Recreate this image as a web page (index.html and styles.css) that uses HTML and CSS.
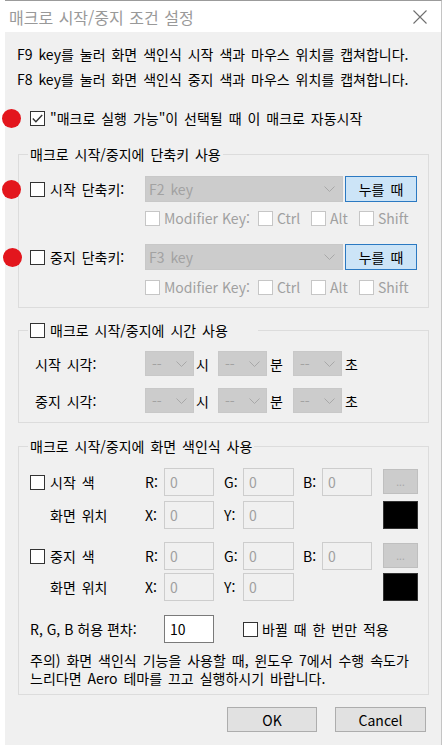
FILE: index.html
```html
<!DOCTYPE html>
<html lang="ko">
<head>
<meta charset="utf-8">
<title>매크로 시작/중지 조건 설정</title>
<link rel="stylesheet" href="styles.css">
</head>
<body>
<div class="window">
  <div class="titlebar">
    <span class="title">매크로 시작/중지 조건 설정</span>
    <svg class="close" width="14" height="14" viewBox="0 0 14 14"><path d="M0.5 0.5 L13.5 13.5 M13.5 0.5 L0.5 13.5" stroke="#6f6f6f" stroke-width="1.1" fill="none"/></svg>
  </div>
  <div class="content">
    <div class="line">F9 key를 눌러 화면 색인식 시작 색과 마우스 위치를 캡쳐합니다.</div>
    <div class="line">F8 key를 눌러 화면 색인식 중지 색과 마우스 위치를 캡쳐합니다.</div>

    <div class="check-row autostart">
      <span class="dot d-auto"></span>
      <span class="cb"><svg width="11" height="9" viewBox="0 0 11 9"><path d="M0.8 4.6 L3.9 7.7 L10.2 1" stroke="#333" stroke-width="1.4" fill="none"/></svg></span>
      <span>"매크로 실행 가능"이 선택될 때 이 매크로 자동시작</span>
    </div>

    <fieldset class="group hotkeys">
      <legend>매크로 시작/중지에 단축키 사용</legend>
      <div class="hk-row">
        <span class="dot d-hk1"></span>
        <span class="hk-label"><span class="cb"></span>시작 단축키:</span>
        <span class="combo wide"><span>F2 key</span><svg class="chev" width="11" height="6" viewBox="0 0 11 6"><path d="M0.5 0.5 L5.5 5.5 L10.5 0.5" stroke="#a8a8a8" fill="none"/></svg></span>
        <button class="press">누를 때</button>
      </div>
      <div class="mod-row">
        <span class="mod m1"><span class="cb dis"></span>Modifier Key:</span>
        <span class="mod m2"><span class="cb dis"></span>Ctrl</span>
        <span class="mod m3"><span class="cb dis"></span>Alt</span>
        <span class="mod"><span class="cb dis"></span>Shift</span>
      </div>
      <div class="hk-row second">
        <span class="dot d-hk2"></span>
        <span class="hk-label"><span class="cb"></span>중지 단축키:</span>
        <span class="combo wide"><span>F3 key</span><svg class="chev" width="11" height="6" viewBox="0 0 11 6"><path d="M0.5 0.5 L5.5 5.5 L10.5 0.5" stroke="#a8a8a8" fill="none"/></svg></span>
        <button class="press">누를 때</button>
      </div>
      <div class="mod-row second">
        <span class="mod m1"><span class="cb dis"></span>Modifier Key:</span>
        <span class="mod m2"><span class="cb dis"></span>Ctrl</span>
        <span class="mod m3"><span class="cb dis"></span>Alt</span>
        <span class="mod"><span class="cb dis"></span>Shift</span>
      </div>
    </fieldset>

    <fieldset class="group timegrp">
      <legend class="cb-legend"><span class="legend-inner"><span class="cb"></span>매크로 시작/중지에 시간 사용</span></legend>
      <div class="time-row">
        <span class="time-label">시작 시각:</span>
        <span class="combo small"><span>--</span><svg class="chev" width="11" height="6" viewBox="0 0 11 6"><path d="M0.5 0.5 L5.5 5.5 L10.5 0.5" stroke="#a8a8a8" fill="none"/></svg></span>
        <span class="unit u1">시</span>
        <span class="combo small"><span>--</span><svg class="chev" width="11" height="6" viewBox="0 0 11 6"><path d="M0.5 0.5 L5.5 5.5 L10.5 0.5" stroke="#a8a8a8" fill="none"/></svg></span>
        <span class="unit u2">분</span>
        <span class="combo small"><span>--</span><svg class="chev" width="11" height="6" viewBox="0 0 11 6"><path d="M0.5 0.5 L5.5 5.5 L10.5 0.5" stroke="#a8a8a8" fill="none"/></svg></span>
        <span class="unit u3">초</span>
      </div>
      <div class="time-row second">
        <span class="time-label">중지 시각:</span>
        <span class="combo small"><span>--</span><svg class="chev" width="11" height="6" viewBox="0 0 11 6"><path d="M0.5 0.5 L5.5 5.5 L10.5 0.5" stroke="#a8a8a8" fill="none"/></svg></span>
        <span class="unit u1">시</span>
        <span class="combo small"><span>--</span><svg class="chev" width="11" height="6" viewBox="0 0 11 6"><path d="M0.5 0.5 L5.5 5.5 L10.5 0.5" stroke="#a8a8a8" fill="none"/></svg></span>
        <span class="unit u2">분</span>
        <span class="combo small"><span>--</span><svg class="chev" width="11" height="6" viewBox="0 0 11 6"><path d="M0.5 0.5 L5.5 5.5 L10.5 0.5" stroke="#a8a8a8" fill="none"/></svg></span>
        <span class="unit u3">초</span>
      </div>
    </fieldset>

    <fieldset class="group colorgrp">
      <legend>매크로 시작/중지에 화면 색인식 사용</legend>
      <div class="color-row">
        <span class="c-label"><span class="cb"></span>시작 색</span>
        <span class="k">R:</span><span class="tb">0</span><span></span>
        <span class="k">G:</span><span class="tb">0</span><span></span>
        <span class="k">B:</span><span class="tb">0</span><span></span>
        <span class="dots-btn">...</span>
      </div>
      <div class="color-row pos">
        <span class="c-label sub">화면 위치</span>
        <span class="k">X:</span><span class="tb">0</span><span></span>
        <span class="k">Y:</span><span class="tb">0</span><span></span>
        <span></span><span></span><span></span>
        <span class="swatch"></span>
      </div>
      <div class="color-row second">
        <span class="c-label"><span class="cb"></span>중지 색</span>
        <span class="k">R:</span><span class="tb">0</span><span></span>
        <span class="k">G:</span><span class="tb">0</span><span></span>
        <span class="k">B:</span><span class="tb">0</span><span></span>
        <span class="dots-btn">...</span>
      </div>
      <div class="color-row pos2">
        <span class="c-label sub">화면 위치</span>
        <span class="k">X:</span><span class="tb">0</span><span></span>
        <span class="k">Y:</span><span class="tb">0</span><span></span>
        <span></span><span></span><span></span>
        <span class="swatch"></span>
      </div>
      <div class="tol-row">
        <span class="tol-label">R, G, B 허용 편차:</span>
        <span class="tb white">10</span>
        <span class="once"><span class="cb"></span>바뀔 때 한 번만 적용</span>
      </div>
      <p class="note">주의) 화면 색인식 기능을 사용할 때, 윈도우 7에서 수행 속도가<br>느리다면 Aero 테마를 끄고 실행하시기 바랍니다.</p>
    </fieldset>

    <div class="actions">
      <button class="btn ok">OK</button>
      <button class="btn cancel">Cancel</button>
    </div>
  </div>
</div>
</body>
</html>
```

FILE: styles.css
```css
* { box-sizing: border-box; }
html, body { margin: 0; padding: 0; background: #fff; }
body {
  font-family: "Noto Sans CJK KR", "Noto Sans", sans-serif;
  font-size: 14px;
  line-height: 18px;
  word-spacing: 2px;
  color: #000;
}
.window {
  margin-left: 5px;
  width: 437px;
  height: 745px;
  border-top: 1px solid #9b9b9b;
  border-right: 1px solid #c4c4c4;
  display: flex;
  flex-direction: column;
}
.titlebar {
  flex: none;
  height: 31px;
  background: #fff;
  display: flex;
  align-items: center;
  justify-content: space-between;
  padding: 0 14px 0 4px;
}
.title { font-size: 16px; color: #999; white-space: nowrap; word-spacing: 1px; }
.close { display: block; }
.content {
  flex: 1;
  background: #f0f0f0;
  padding: 10px 12px 0 12px;
}
.line { line-height: 25px; white-space: nowrap; }

.check-row { display: flex; align-items: center; height: 20px; position: relative; white-space: nowrap; }
.autostart { margin-top: 16px; padding-left: 13px; }

.cb {
  flex: none;
  width: 15px;
  height: 15px;
  border: 1px solid #333;
  background: #fff;
  margin-right: 5px;
  display: inline-flex;
  align-items: center;
  justify-content: center;
}
.cb.dis { border-color: #c6c6c6; margin-right: 4px; }

.dot {
  position: absolute;
  width: 19px;
  height: 19px;
  border-radius: 50%;
  background: #e3161d;
  top: 50%;
  margin-top: -9.5px;
}
.d-auto { left: -15px; }
.d-hk1 { left: -28px; }
.d-hk2 { left: -27px; }

.group {
  margin-left: 1px;
  margin-right: 0;
  margin-bottom: 0;
  border: 1px solid #dcdcdc;
  min-width: 0;
}
legend {
  padding: 0 2px;
  margin-left: -2px;
  line-height: 18px;
  white-space: nowrap;
}
.hotkeys { margin-top: 17px; padding: 13px 0 11px 11px; }

.hk-row { display: flex; align-items: center; height: 26px; position: relative; }
.hk-row.second { margin-top: 17px; }
.hk-label { width: 115px; display: flex; align-items: center; white-space: nowrap; }
.combo {
  height: 26px;
  background: #ccc;
  border: 1px solid #c8c8c8;
  color: #a2a2a2;
  display: flex;
  align-items: center;
  justify-content: space-between;
  padding: 0 7px 0 3px;
  white-space: nowrap;
}
.combo.wide { width: 198px; }
.chev { display: block; }
.press {
  margin-left: 2px;
  width: 72px;
  height: 26px;
  background: #cce4f7;
  border: 1px solid #2b79c2;
  font: inherit;
  word-spacing: 2px;
  color: #000;
  padding: 0;
}
.mod-row {
  display: flex;
  align-items: center;
  height: 18px;
  margin: 7px 0 0 115px;
  color: #a0a0a0;
  white-space: nowrap;
  word-spacing: 0;
}
.mod-row.second { margin-top: 8px; }
.mod { display: flex; align-items: center; }
.m1 { width: 113px; }
.m2 { width: 53px; }
.m3 { width: 48px; }

.timegrp { margin-top: 13px; padding: 12px 0 9px 11px; }
.cb-legend { width: 230px; }
.legend-inner { display: flex; align-items: center; }
.time-row { display: flex; align-items: center; height: 25px; white-space: nowrap; }
.time-row.second { margin-top: 12px; }
.time-label { width: 115px; padding-left: 5px; }
.combo.small { width: 49px; height: 25px; padding: 0 6px 0 6px; }
.unit { padding-left: 2px; }
.u1 { width: 24px; }
.u2 { width: 26px; padding-left: 3px; }
.u3 { padding-left: 3px; }

.colorgrp { margin-top: 14px; padding: 13px 0 7px 11px; }
.color-row {
  display: grid;
  grid-template-columns: 115px 19px 50px 10px 19px 51px 9px 19px 50px 11px 35px;
  align-items: center;
  height: 28px;
  white-space: nowrap;
}
.color-row.pos { margin-top: 5px; }
.color-row.second { margin-top: 13px; }
.color-row.pos2 { margin-top: 3px; }
.c-label { display: flex; align-items: center; }
.c-label.sub { padding-left: 20px; }
.tb {
  height: 28px;
  border: 1px solid #cdcdcd;
  background: #f0f0f0;
  color: #a0a0a0;
  padding-left: 5px;
  display: flex;
  align-items: center;
}
.dots-btn {
  align-self: start;
  margin-top: 1px;
  height: 25px;
  background: #ccc;
  border: 1px solid #bfbfbf;
  color: #a8a8a8;
  font-size: 10px;
  display: flex;
  align-items: center;
  justify-content: center;
}
.swatch { height: 28px; background: #000; border: 1px solid #333; }

.tol-row { display: flex; align-items: center; height: 28px; margin-top: 14px; white-space: nowrap; }
.tol-label { width: 134px; word-spacing: 0; }
.tb.white { width: 50px; background: #fff; border-color: #7a7a7a; color: #000; }
.once { display: flex; align-items: center; margin-left: 29px; }
.once .cb { margin-right: 4px; }
.note { margin: 8px 0 0 0; line-height: 18px; white-space: nowrap; }

.actions {
  display: flex;
  justify-content: flex-end;
  gap: 18px;
  margin-top: 12px;
  padding-right: 3px;
}
.btn {
  height: 25px;
  background: #e1e1e1;
  border: 1px solid #adadad;
  font: inherit;
  color: #000;
  padding: 0;
}
.ok { width: 90px; }
.cancel { width: 91px; }
```
